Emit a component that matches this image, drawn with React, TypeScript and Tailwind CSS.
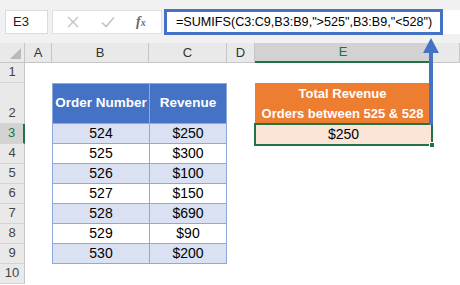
import React from 'react';

const rowsData = [
  { n: '524', v: '$250' },
  { n: '525', v: '$300' },
  { n: '526', v: '$100' },
  { n: '527', v: '$150' },
  { n: '528', v: '$690' },
  { n: '529', v: '$90' },
  { n: '530', v: '$200' },
];

const colLetters = ['A', 'B', 'C', 'D', 'E', ''];

function RowHead({ label, active = false }: { label: string; active?: boolean }) {
  return (
    <div
      className={`flex items-end justify-center pb-[1px] text-[13px] border-b border-[#d4d4d4] ${
        active
          ? 'bg-[#d2d2d2] text-[#217346] border-r-2 border-r-[#217346]'
          : 'bg-[#e9e9e9] text-[#444] border-r border-r-[#c6c6c6]'
      }`}
    >
      {label}
    </div>
  );
}

function FormulaBar() {
  return (
    <div className="h-[43px] bg-[#f1f1f1] flex items-start pt-[10px]">
      <div className="ml-[5px] w-[43px] h-[24px] bg-white border border-[#dadada] flex items-center pl-[7px] text-[13px] text-[#222]">
        E3
      </div>
      <div className="ml-[4px] w-[110px] h-[24px] bg-white border border-[#e0e0e0] flex items-center">
        <svg width="12" height="12" viewBox="0 0 12 12" className="ml-[14px]">
          <path d="M1 1L11 11M11 1L1 11" stroke="#c4c4c4" strokeWidth="1.4" />
        </svg>
        <svg width="14" height="12" viewBox="0 0 14 12" className="ml-[22px]">
          <path d="M1 6.5L5 10.5L13 1.5" stroke="#c4c4c4" strokeWidth="1.6" fill="none" />
        </svg>
        <span className="ml-[21px] font-['Liberation_Serif',serif] italic font-bold text-[14px] text-[#6a6a6a] leading-none">
          f<span className="text-[10px]">x</span>
        </span>
      </div>
      <div className="ml-[2px] flex-1 h-[24px] bg-white relative">
        <div className="absolute left-0 -top-[1px] w-[279px] h-[26px] border-[3px] border-[#4472c4] flex items-center pl-[9px] text-[12.6px] text-black whitespace-nowrap">
          =SUMIFS(C3:C9,B3:B9,"&gt;525",B3:B9,"&lt;528")
        </div>
      </div>
    </div>
  );
}

export default function App() {
  return (
    <div className="w-[460px] h-[285px] bg-white overflow-hidden relative font-['Liberation_Sans',Arial,sans-serif]">
      <FormulaBar />
      <div className="grid grid-cols-[25px_27px_97px_78px_28px_177px_1fr] grid-rows-[20px_20px_41px_repeat(8,20px)]">
        {/* column headers */}
        <div className="bg-[#e9e9e9] border-r border-b border-[#c6c6c6] relative">
          <div className="absolute right-[3px] bottom-[3px] w-0 h-0 border-l-[11px] border-l-transparent border-b-[11px] border-b-[#b9b9b9]" />
        </div>
        {colLetters.map((c) =>
          c === 'E' ? (
            <div
              key={c}
              className="bg-[#d2d2d2] border-r border-r-[#c6c6c6] border-b-2 border-b-[#217346] flex items-center justify-center text-[13px] text-[#217346]"
            >
              {c}
            </div>
          ) : (
            <div
              key={c || 'f'}
              className="bg-[#e9e9e9] border-r border-b border-[#c6c6c6] flex items-center justify-center text-[13px] text-[#333]"
            >
              {c}
            </div>
          )
        )}

        {/* row 1 */}
        <RowHead label="1" />
        <div className="col-span-6" />

        {/* row 2 */}
        <RowHead label="2" />
        <div />
        <div className="bg-[#4472c4] border-l border-t border-b border-[#8ea9db] flex items-center justify-center text-white font-bold text-[13.5px]">
          Order Number
        </div>
        <div className="bg-[#4472c4] border-l border-r border-t border-b border-[#8ea9db] flex items-center justify-center text-white font-bold text-[13.5px]">
          Revenue
        </div>
        <div />
        <div className="bg-[#ed7d31] flex flex-col items-center justify-center text-white font-bold text-[13px] leading-[20px] pr-[2px]">
          <span>Total Revenue</span>
          <span>Orders between 525 &amp; 528</span>
        </div>
        <div />

        {rowsData.map((r, i) => {
          const rowNum = i + 3;
          const bg = i % 2 === 0 ? 'bg-[#d9e1f2]' : 'bg-white';
          return (
            <React.Fragment key={r.n}>
              <RowHead label={String(rowNum)} active={rowNum === 3} />
              <div />
              <div className={`${bg} border-l border-b border-[#8ea9db] flex items-center justify-center text-[14px] text-black`}>
                {r.n}
              </div>
              <div className={`${bg} border-l border-r border-b border-[#8ea9db] flex items-center justify-center text-[14px] text-black`}>
                {r.v}
              </div>
              <div />
              {rowNum === 3 ? (
                <div className="bg-[#fce4d6] relative flex items-center justify-center text-[14px] text-black">
                  $250
                  <div className="absolute -left-[1px] -top-[1px] -right-[1px] -bottom-[2px] border-2 border-[#217346]" />
                  <div className="absolute -right-[3px] -bottom-[4px] w-[6px] h-[6px] bg-[#217346] border border-white" />
                </div>
              ) : (
                <div />
              )}
              <div />
            </React.Fragment>
          );
        })}

        {/* row 10 */}
        <RowHead label="10" />
        <div className="col-span-6" />
      </div>

      {/* arrow from E3 to formula bar */}
      <svg className="absolute left-0 top-0 pointer-events-none" width="460" height="285">
        <line x1="431" y1="125" x2="431" y2="50" stroke="#4472c4" strokeWidth="4" />
        <polygon points="423,53 439,53 431,38" fill="#4472c4" />
      </svg>
    </div>
  );
}
